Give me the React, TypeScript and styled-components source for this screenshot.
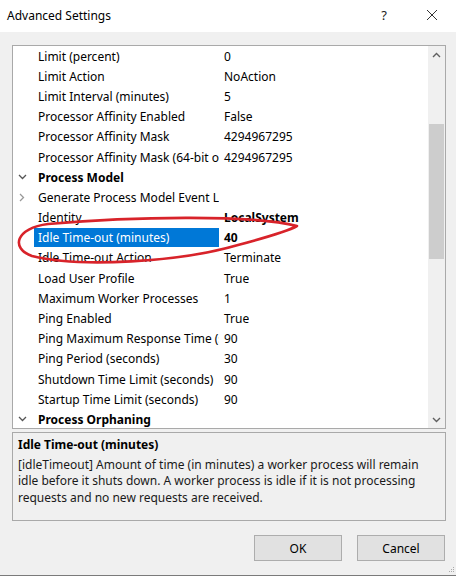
import React from 'react'
import styled, { createGlobalStyle } from 'styled-components'

const GlobalStyle = createGlobalStyle`
  html, body {
    margin: 0;
    padding: 0;
    background: #f0f0f0;
  }
  body {
    font-family: "Noto Sans", "Open Sans", sans-serif;
    font-size: 12px;
    color: #000;
  }
`

interface Row {
  name: string
  value?: string
  kind?: 'category' | 'collapsed' | 'plain'
  bold?: boolean
  selected?: boolean
}

const rows: Row[] = [
  { name: 'Limit (percent)', value: '0' },
  { name: 'Limit Action', value: 'NoAction' },
  { name: 'Limit Interval (minutes)', value: '5' },
  { name: 'Processor Affinity Enabled', value: 'False' },
  { name: 'Processor Affinity Mask', value: '4294967295' },
  { name: 'Processor Affinity Mask (64-bit option)', value: '4294967295' },
  { name: 'Process Model', kind: 'category' },
  { name: 'Generate Process Model Event Log Entry', kind: 'collapsed' },
  { name: 'Identity', value: 'LocalSystem', bold: true },
  { name: 'Idle Time-out (minutes)', value: '40', bold: true, selected: true },
  { name: 'Idle Time-out Action', value: 'Terminate' },
  { name: 'Load User Profile', value: 'True' },
  { name: 'Maximum Worker Processes', value: '1' },
  { name: 'Ping Enabled', value: 'True' },
  { name: 'Ping Maximum Response Time (seconds)', value: '90' },
  { name: 'Ping Period (seconds)', value: '30' },
  { name: 'Shutdown Time Limit (seconds)', value: '90' },
  { name: 'Startup Time Limit (seconds)', value: '90' },
  { name: 'Process Orphaning', kind: 'category' }
]

const Window = styled.div`
  position: relative;
  width: 456px;
  height: 576px;
  box-sizing: border-box;
  border-bottom: 1px solid #7a7a7a;
  display: flex;
  flex-direction: column;
  overflow: hidden;
`

const TitleBar = styled.div`
  height: 32px;
  background: #fff;
  display: flex;
  align-items: center;
  padding: 0 0 2px 7px;
  box-sizing: border-box;
`

const Title = styled.div`
  flex: 1;
  font-size: 12px;
  color: #000;
`

const TitleButton = styled.div`
  width: 48px;
  height: 30px;
  display: flex;
  align-items: center;
  justify-content: center;
  color: #222;
  font-size: 13px;
`

const Body = styled.div`
  flex: 1;
  padding: 13px 10px 0 12px;
  display: flex;
  flex-direction: column;
`

const Grid = styled.div`
  position: relative;
  height: 384px;
  box-sizing: border-box;
  border: 1px solid #a9a9a9;
  background: #fff;
  display: flex;
  overflow: hidden;
`

const RowList = styled.div`
  flex: 1;
  overflow: hidden;
`

const GridRow = styled.div`
  height: 20.2px;
  display: flex;
  align-items: center;
  white-space: nowrap;
`

const Gutter = styled.div`
  width: 21px;
  box-sizing: border-box;
  flex-shrink: 0;
  display: flex;
  align-items: center;
  justify-content: center;
  padding-right: 3px;
`

const NameCell = styled.div<{ $selected?: boolean; $category?: boolean }>`
  width: ${({ $category }) => ($category ? 'auto' : '185px')};
  flex-shrink: 0;
  height: 19px;
  line-height: 19px;
  padding-left: 4px;
  box-sizing: border-box;
  overflow: hidden;
  background: ${({ $selected }) => ($selected ? '#0078d7' : 'transparent')};
  color: ${({ $selected }) => ($selected ? '#fff' : '#000')};
  font-weight: ${({ $category }) => ($category ? 700 : 400)};
`

const ValueCell = styled.div<{ $bold?: boolean }>`
  padding-left: 5px;
  font-weight: ${({ $bold }) => ($bold ? 700 : 400)};
  overflow: hidden;
`

const ScrollBar = styled.div`
  width: 17px;
  flex-shrink: 0;
  background: #f0f0f0;
  display: flex;
  flex-direction: column;
`

const ScrollArrow = styled.div`
  height: 17px;
  display: flex;
  align-items: center;
  justify-content: center;
`

const ScrollTrack = styled.div`
  flex: 1;
  display: flex;
  flex-direction: column;
  align-items: center;
  padding-top: 61px;
`

const Thumb = styled.div`
  width: 15px;
  height: 135px;
  background: #cdcdcd;
`

const Scribble = styled.svg`
  position: absolute;
  left: 0;
  top: 0;
  pointer-events: none;
`

const Description = styled.div`
  margin-top: 3px;
  height: 89px;
  box-sizing: border-box;
  border: 1px solid #a9a9a9;
  padding: 4px 6px 0 5px;
  line-height: 16.5px;
`

const DescTitle = styled.div`
  font-weight: 700;
  margin-bottom: 3px;
`

const DescText = styled.div`
  color: #1a1a1a;
`

const Buttons = styled.div`
  margin-top: 14px;
  display: flex;
  justify-content: flex-end;
  gap: 15px;
  padding-right: 1px;
`

const Button = styled.div`
  width: 88px;
  height: 26px;
  box-sizing: border-box;
  border: 1px solid #adadad;
  background: #e1e1e1;
  display: flex;
  align-items: center;
  justify-content: center;
`

const Grip = styled.svg`
  position: absolute;
  right: 1px;
  bottom: 2px;
`

const ChevronDown = () => (
  <svg width="9" height="6" viewBox="0 0 9 6">
    <path d="M1 1 L4.5 4.5 L8 1" fill="none" stroke="#555" strokeWidth="1.3" />
  </svg>
)

const ChevronRight = () => (
  <svg width="6" height="9" viewBox="0 0 6 9">
    <path d="M1 1 L4.5 4.5 L1 8" fill="none" stroke="#999" strokeWidth="1.3" />
  </svg>
)

const App: React.FC = () => {
  return (
    <Window>
      <GlobalStyle />
      <TitleBar>
        <Title>Advanced Settings</Title>
        <TitleButton>?</TitleButton>
        <TitleButton>
          <svg width="12" height="12" viewBox="0 0 12 12">
            <path d="M1 1 L11 11 M11 1 L1 11" stroke="#333" strokeWidth="1" />
          </svg>
        </TitleButton>
      </TitleBar>
      <Body>
        <Grid>
          <RowList>
            {rows.map((r) => (
              <GridRow key={r.name}>
                <Gutter>
                  {r.kind === 'category' && <ChevronDown />}
                  {r.kind === 'collapsed' && <ChevronRight />}
                </Gutter>
                <NameCell $selected={r.selected} $category={r.kind === 'category'}>
                  {r.name}
                </NameCell>
                {r.value && <ValueCell $bold={r.bold}>{r.value}</ValueCell>}
              </GridRow>
            ))}
          </RowList>
          <ScrollBar>
            <ScrollArrow>
              <svg width="9" height="6" viewBox="0 0 9 6">
                <path d="M1 5 L4.5 1.5 L8 5" fill="none" stroke="#606060" strokeWidth="1.4" />
              </svg>
            </ScrollArrow>
            <ScrollTrack>
              <Thumb />
            </ScrollTrack>
            <ScrollArrow>
              <svg width="9" height="6" viewBox="0 0 9 6">
                <path d="M1 1 L4.5 4.5 L8 1" fill="none" stroke="#606060" strokeWidth="1.4" />
              </svg>
            </ScrollArrow>
          </ScrollBar>
        </Grid>
        <Description>
          <DescTitle>Idle Time-out (minutes)</DescTitle>
          <DescText>
            [idleTimeout] Amount of time (in minutes) a worker process will remain idle before it
            shuts down. A worker process is idle if it is not processing requests and no new
            requests are received.
          </DescText>
        </Description>
        <Buttons>
          <Button>OK</Button>
          <Button>Cancel</Button>
        </Buttons>
      </Body>
      <Scribble width="456" height="576" viewBox="0 0 456 576">
        <path
          d="M297 226 C 250 214, 130 217, 48 224 C 16 228, 10 248, 32 256 C 80 268, 180 262, 238 245 C 268 237, 288 231, 297 226"
          fill="none"
          stroke="#d8232a"
          strokeWidth="2.6"
          strokeLinecap="round"
        />
      </Scribble>
      <Grip width="6" height="6" viewBox="0 0 6 6">
        <rect x="4" y="0" width="1" height="1" fill="#aaa" />
        <rect x="2" y="2" width="1" height="1" fill="#aaa" />
        <rect x="4" y="2" width="1" height="1" fill="#aaa" />
        <rect x="0" y="4" width="1" height="1" fill="#aaa" />
        <rect x="2" y="4" width="1" height="1" fill="#aaa" />
        <rect x="4" y="4" width="1" height="1" fill="#aaa" />
      </Grip>
    </Window>
  )
}

export default App
